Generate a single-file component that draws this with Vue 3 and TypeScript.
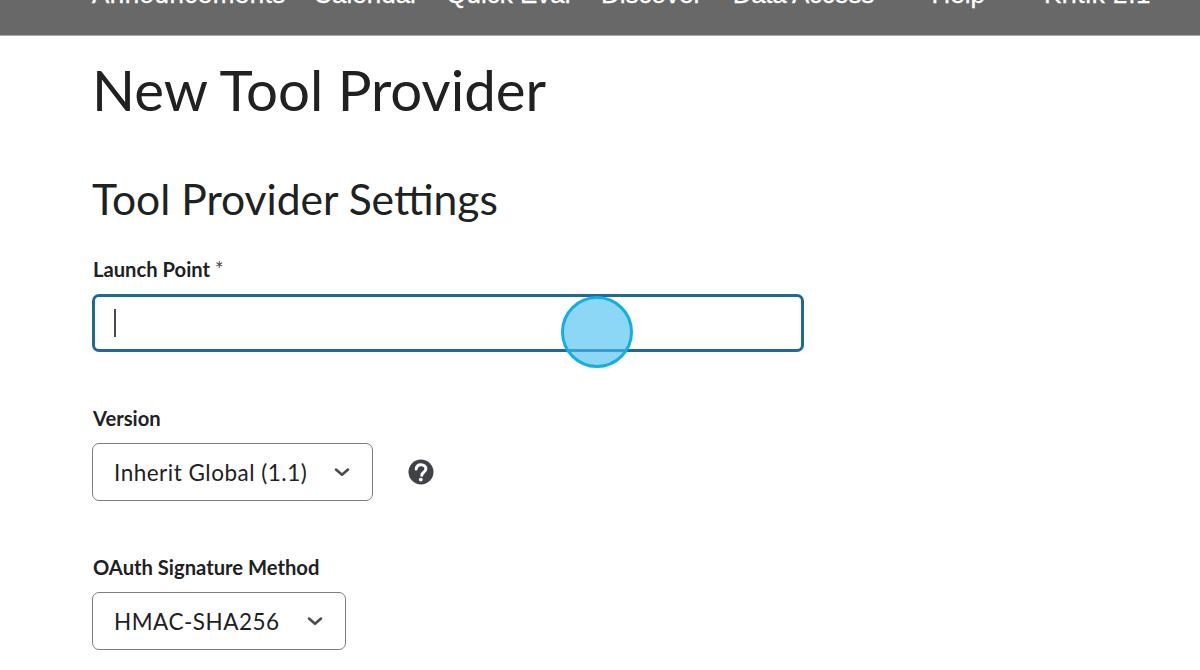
<script setup lang="ts">
const navLeft: string[] = ['Announcements', 'Calendar', 'Quick Eval', 'Discover', 'Data Access']
const navRight: string[] = ['Help', 'Kritik 2.1']
</script>

<template>
  <div class="page">
    <header class="topbar">
      <nav class="nav">
        <span v-for="item in navLeft" :key="item" class="nav-item">{{ item }}</span>
        <span class="nav-item help">{{ navRight[0] }}</span>
        <span class="nav-item kritik">{{ navRight[1] }}</span>
      </nav>
    </header>
    <main class="content">
      <h1 class="title">New Tool Provider</h1>
      <h2 class="subtitle">Tool Provider Settings</h2>

      <div class="field first">
        <label class="label">Launch Point <span class="req">*</span></label>
        <div class="input"><span class="caret"></span></div>
      </div>

      <div class="field second">
        <label class="label">Version</label>
        <div class="row">
          <div class="select version">
            <span>Inherit Global (1.1)</span>
            <svg class="chev" width="16" height="10" viewBox="0 0 16 10"><path d="M2 2.6L8 7.8l6-5.2" fill="none" stroke="#494c4e" stroke-width="2.6" stroke-linecap="round" stroke-linejoin="round"/></svg>
          </div>
          <svg class="help-icon" width="26" height="26" viewBox="0 0 26 26">
            <circle cx="13" cy="13" r="12.5" fill="#3f4246"/>
            <path d="M8.2 10c.2-2.7 2.2-4.3 4.9-4.3 2.8 0 4.8 1.7 4.8 4.1 0 1.9-1.1 2.8-2.4 3.7-1.1.7-1.7 1.3-1.7 2.7" fill="none" stroke="#fff" stroke-width="3" stroke-linecap="round"/>
            <circle cx="12.8" cy="20.6" r="1.9" fill="#fff"/>
          </svg>
        </div>
      </div>

      <div class="field third">
        <label class="label">OAuth Signature Method</label>
        <div class="select oauth">
          <span>HMAC-SHA256</span>
          <svg class="chev" width="16" height="10" viewBox="0 0 16 10"><path d="M2 2.6L8 7.8l6-5.2" fill="none" stroke="#494c4e" stroke-width="2.6" stroke-linecap="round" stroke-linejoin="round"/></svg>
        </div>
      </div>
    </main>
    <div class="pointer"></div>
  </div>
</template>

<style>
html, body { margin: 0; background: #fff; }
</style>

<style scoped>
.page {
  position: relative;
  width: 1200px;
  height: 670px;
  overflow: hidden;
  background: #fff;
  font-family: Lato, sans-serif;
  color: #202122;
}
.topbar {
  height: 35px;
  background: #686868;
  border-bottom: 1px solid #a8a8a8;
  overflow: hidden;
  display: flex;
  align-items: flex-end;
}
.nav {
  display: flex;
  padding: 0 0 28px 92px;
  font-family: "Liberation Sans", Arial, sans-serif;
  font-size: 26px;
  line-height: 26px;
  color: #fff;
  white-space: nowrap;
}
.nav-item { margin-right: 30.5px; -webkit-text-stroke: 0.3px #fff; }
.nav-item:first-child { letter-spacing: 0.45px; margin-right: 27.5px; }
.nav-item:nth-child(2) { margin-right: 27.5px; }
.nav-item:nth-child(5) { letter-spacing: -0.3px; }
.help { margin-left: 27px; margin-right: 59px; }
.kritik { margin-right: 0; letter-spacing: 0.6px; }
.content { padding: 0 92px; }
.title {
  margin: 0;
  padding-top: 20px;
  font-size: 56.4px;
  line-height: 66px;
  font-weight: 400;
}
.subtitle {
  margin: 0;
  padding-top: 52px;
  font-size: 42.6px;
  line-height: 50px;
  font-weight: 400;
}
.label {
  display: block;
  padding-left: 1px;
  font-size: 20.2px;
  line-height: 24px;
  font-weight: 700;
  color: #202122;
}
.req { font-weight: 400; color: #494c4e; }
.field.first { margin-top: 33px; }
.field.second { margin-top: 54px; }
.field.third { margin-top: 54px; }
.input {
  margin-top: 13px;
  width: 712px;
  height: 58px;
  box-sizing: border-box;
  border: 3px solid #1d6a99;
  border-radius: 7px;
  display: flex;
  align-items: center;
  padding-left: 19px;
}
.caret { width: 2px; height: 28px; background: #494c4e; }
.row { display: flex; align-items: center; margin-top: 13px; }
.select {
  height: 58px;
  box-sizing: border-box;
  border: 1px solid #7b7f82;
  border-radius: 7px;
  display: flex;
  align-items: center;
  padding-left: 21px;
  font-size: 22.5px;
  letter-spacing: 0.5px;
  color: #202122;
  background: #fff;
}
.version { width: 281px; }
.oauth { width: 254px; margin-top: 13px; }
.chev { margin-left: 27px; }
.help-icon { margin-left: 35px; }
.pointer {
  position: absolute;
  left: 561px;
  top: 296px;
  width: 72px;
  height: 72px;
  box-sizing: border-box;
  border: 3px solid #12afe0;
  border-radius: 50%;
  background: rgba(71, 190, 240, 0.62);
}
</style>
